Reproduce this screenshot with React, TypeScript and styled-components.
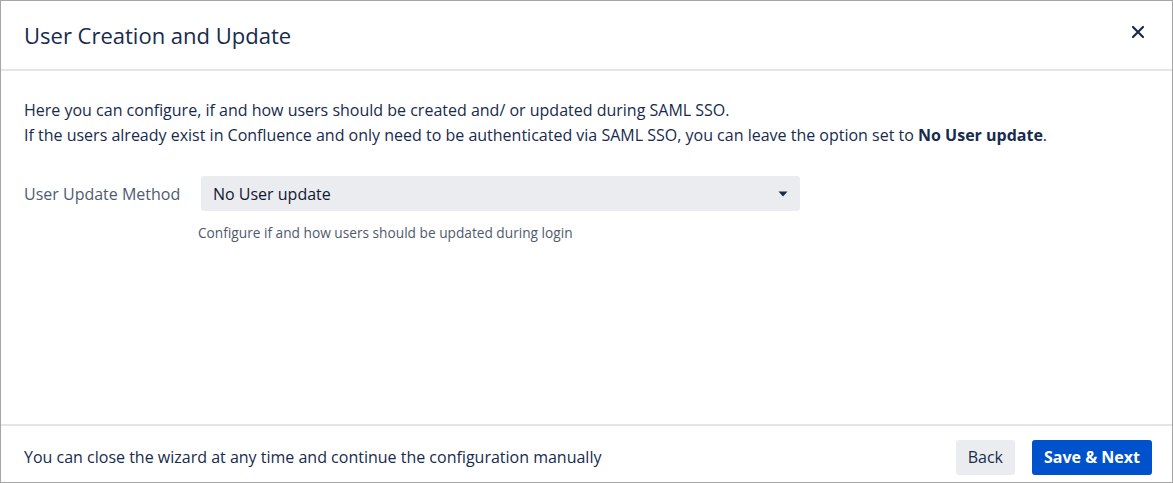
import React from "react";
import styled, { createGlobalStyle } from "styled-components";

const Global = createGlobalStyle`
  html, body { margin: 0; padding: 0; background: #ffffff; }
  body { font-family: "Open Sans", "Noto Sans", sans-serif; color: #172b4d; }
  * { box-sizing: border-box; }
`;

const Dialog = styled.div`
  width: 1173px;
  height: 483px;
  border: 1px solid #a6a6a6;
  display: flex;
  flex-direction: column;
  background: #fff;
`;

const Header = styled.header`
  height: 70px;
  display: flex;
  align-items: center;
  justify-content: space-between;
  padding: 0 22px 0 23px;
  border-bottom: 2px solid #e4e5e8;
  flex-shrink: 0;
`;

const Title = styled.h1`
  margin: 0;
  font-size: 22px;
  font-weight: 400;
  color: #172b4d;
`;

const CloseButton = styled.button`
  border: none;
  background: transparent;
  padding: 0;
  width: 24px;
  height: 24px;
  display: flex;
  align-items: center;
  justify-content: center;
  cursor: pointer;
  margin-bottom: 6px;
`;

const Body = styled.main`
  flex: 1;
  padding: 27px 23px 0 23px;
`;

const Intro = styled.p`
  margin: 0 0 28px 0;
  font-size: 16px;
  line-height: 25px;
  color: #172b4d;
  strong { font-weight: 700; }
`;

const FieldRow = styled.div`
  display: grid;
  grid-template-columns: 177px 599px;
  align-items: center;
`;

const Label = styled.label`
  font-size: 16px;
  color: #4f5b70;
`;

const Select = styled.div`
  height: 35px;
  background: #ebecf0;
  border-radius: 3px;
  display: flex;
  align-items: center;
  justify-content: space-between;
  padding: 0 12px 0 12px;
  font-size: 16px;
  color: #101a2e;
`;

const Help = styled.div`
  margin: 12px 0 0 174px;
  font-size: 13.7px;
  color: #505a6c;
`;

const Footer = styled.footer`
  height: 58px;
  border-top: 2px solid #e4e5e8;
  display: flex;
  align-items: center;
  justify-content: space-between;
  padding: 0 20px 0 23px;
  flex-shrink: 0;
`;

const FooterText = styled.span`
  font-size: 16px;
  color: #172b4d;
  padding-top: 6px;
`;

const Buttons = styled.div`
  display: flex;
  gap: 17px;
  padding-top: 6px;
`;

const Button = styled.button<{ $primary?: boolean }>`
  height: 35px;
  border: none;
  border-radius: 3px;
  padding: 0 12px;
  font-family: inherit;
  font-size: 16px;
  font-weight: ${(p) => (p.$primary ? 700 : 400)};
  background: ${(p) => (p.$primary ? "#0052cc" : "#ebecf0")};
  color: ${(p) => (p.$primary ? "#ffffff" : "#172b4d")};
  cursor: pointer;
`;

export default function App() {
  return (
    <>
      <Global />
      <Dialog>
        <Header>
          <Title>User Creation and Update</Title>
          <CloseButton aria-label="Close">
            <svg width="14" height="14" viewBox="0 0 14 14">
              <path d="M2 2 L12 12 M12 2 L2 12" stroke="#172b4d" strokeWidth="2.2" strokeLinecap="round" />
            </svg>
          </CloseButton>
        </Header>
        <Body>
          <Intro>
            Here you can configure, if and how users should be created and/ or updated during SAML SSO.
            <br />
            If the users already exist in Confluence and only need to be authenticated via SAML SSO, you can leave the option set to <strong>No User update</strong>.
          </Intro>
          <FieldRow>
            <Label>User Update Method</Label>
            <Select>
              <span>No User update</span>
              <svg width="10" height="6" viewBox="0 0 10 6">
                <path d="M0.5 0.5 L9.5 0.5 L5 5.5 Z" fill="#172b4d" />
              </svg>
            </Select>
          </FieldRow>
          <Help>Configure if and how users should be updated during login</Help>
        </Body>
        <Footer>
          <FooterText>You can close the wizard at any time and continue the configuration manually</FooterText>
          <Buttons>
            <Button>Back</Button>
            <Button $primary>Save &amp; Next</Button>
          </Buttons>
        </Footer>
      </Dialog>
    </>
  );
}
